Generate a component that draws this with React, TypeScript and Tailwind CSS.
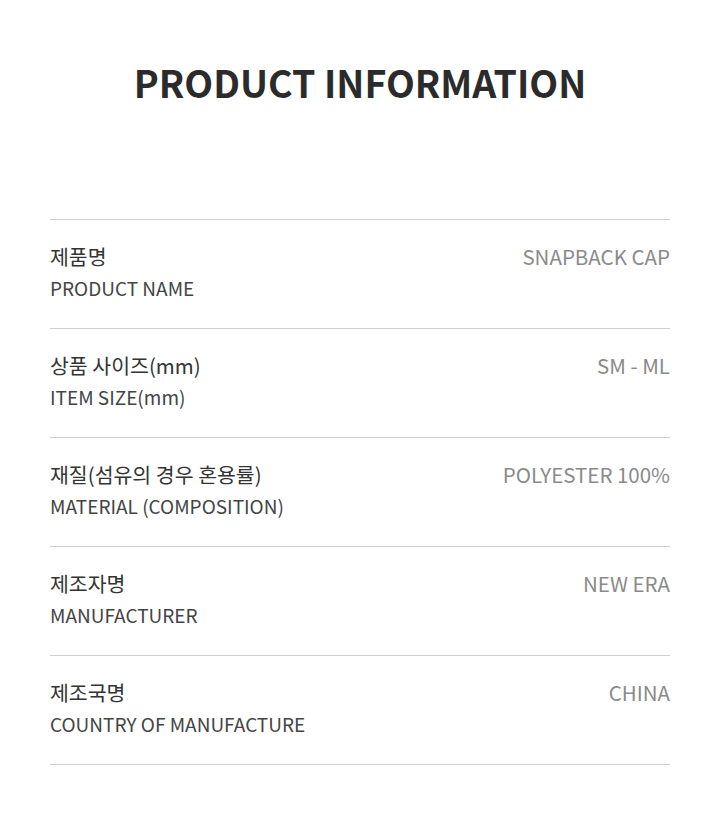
import React from 'react'

const ROWS = [
  { ko: '제품명', en: 'PRODUCT NAME', value: 'SNAPBACK CAP' },
  { ko: '상품 사이즈(mm)', en: 'ITEM SIZE(mm)', value: 'SM - ML' },
  { ko: '재질(섬유의 경우 혼용률)', en: 'MATERIAL (COMPOSITION)', value: 'POLYESTER 100%' },
  { ko: '제조자명', en: 'MANUFACTURER', value: 'NEW ERA' },
  { ko: '제조국명', en: 'COUNTRY OF MANUFACTURE', value: 'CHINA' },
]

export default function App() {
  return (
    <main
      className="w-[720px] min-h-[835px] bg-white px-[50px] pt-[57px] pb-[70px]"
      style={{ fontFamily: '"Noto Sans CJK KR", "Noto Sans", sans-serif' }}
    >
      <h1 className="text-center text-[37.5px] font-bold leading-[50px] text-[#2b2b2b]">
        PRODUCT INFORMATION
      </h1>

      <div className="mt-[112px] border-t border-[#cfcfcf]">
        {ROWS.map(row => (
          <div
            key={row.en}
            className="flex items-start justify-between border-b border-[#cfcfcf] pt-[21px] pb-[26px]"
          >
            <div>
              <div className="text-[20.5px] leading-[31px] text-[#333]">{row.ko}</div>
              <div className="mt-[1px] text-[19px] leading-[29px] text-[#444]">{row.en}</div>
            </div>
            <div className="text-[20.5px] leading-[31px] text-[#8a8a8a]">{row.value}</div>
          </div>
        ))}
      </div>
    </main>
  )
}
